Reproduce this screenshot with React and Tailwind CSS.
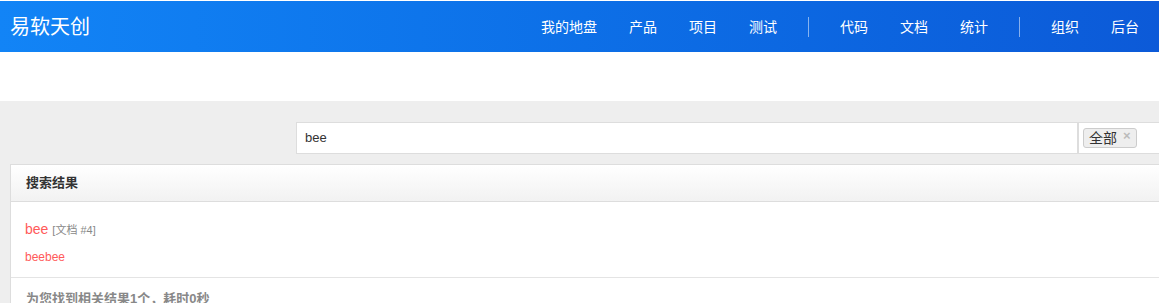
const navGroups = [
  ['我的地盘', '产品', '项目', '测试'],
  ['代码', '文档', '统计'],
  ['组织', '后台'],
]

export default function App() {
  return (
    <div className="min-h-[303px] bg-[#eeeeee] text-[#333] [font-family:'Liberation_Sans','Noto_Sans_CJK_SC',sans-serif]">
      <div className="bg-white pt-px">
        <header className="flex h-[51px] items-center justify-between bg-gradient-to-r from-[#1284f6] to-[#0c5ad8] pl-[10px] pr-[4px]">
          <div className="text-[20px] leading-none text-white">易软天创</div>
          <nav className="flex h-full items-center text-[14px] text-white">
            {navGroups.map((group, gi) => (
              <div key={gi} className="flex items-center">
                {gi > 0 && <span className="mx-[15px] h-[20px] w-px bg-white/50" />}
                {group.map((item) => (
                  <a key={item} className="px-4 leading-[50px]">{item}</a>
                ))}
              </div>
            ))}
          </nav>
        </header>
        <div className="h-[49px]" />
      </div>

      <div className="flex pl-[296px] pt-[21px]">
        <div className="flex h-[32px] flex-1 items-center border border-[#dddddd] bg-white pl-[8px] text-[13px] text-[#333]">
          bee
        </div>
        <div className="flex h-[32px] w-[81px] shrink-0 items-center border-y border-l border-[#dddddd] bg-white pl-[4px]">
          <span className="flex h-[20px] items-start gap-[6px] rounded-[3px] border border-[#cccccc] bg-[#eeeeee] pl-[5px] pr-[5px] text-[14px] leading-[18px] text-[#333]">
            全部
            <span className="text-[13px] font-bold leading-[14px] text-[#bbb]">×</span>
          </span>
        </div>
      </div>

      <div className="ml-[10px] mt-[10px] border-l border-t border-[#dddddd] bg-white">
        <div className="flex h-[37px] items-center border-b border-[#dddddd] bg-gradient-to-b from-white to-[#f2f2f2] pl-[15px] text-[13px] font-bold text-[#333]">
          搜索结果
        </div>
        <div className="border-b border-[#e4e4e4] pb-[11px] pl-[14px] pt-[17px]">
          <div className="flex items-baseline gap-[4px]">
            <span className="text-[14px] text-[#ff5a5a]">bee</span>
            <span className="text-[11px] text-[#888]">[文档 #4]</span>
          </div>
          <div className="mt-[8px] text-[12px] text-[#ff5a5a]">beebee</div>
        </div>
        <div className="pl-[15px] pt-[11px] text-[13px] font-bold text-[#888]">为您找到相关结果1个，耗时0秒</div>
      </div>
    </div>
  )
}
